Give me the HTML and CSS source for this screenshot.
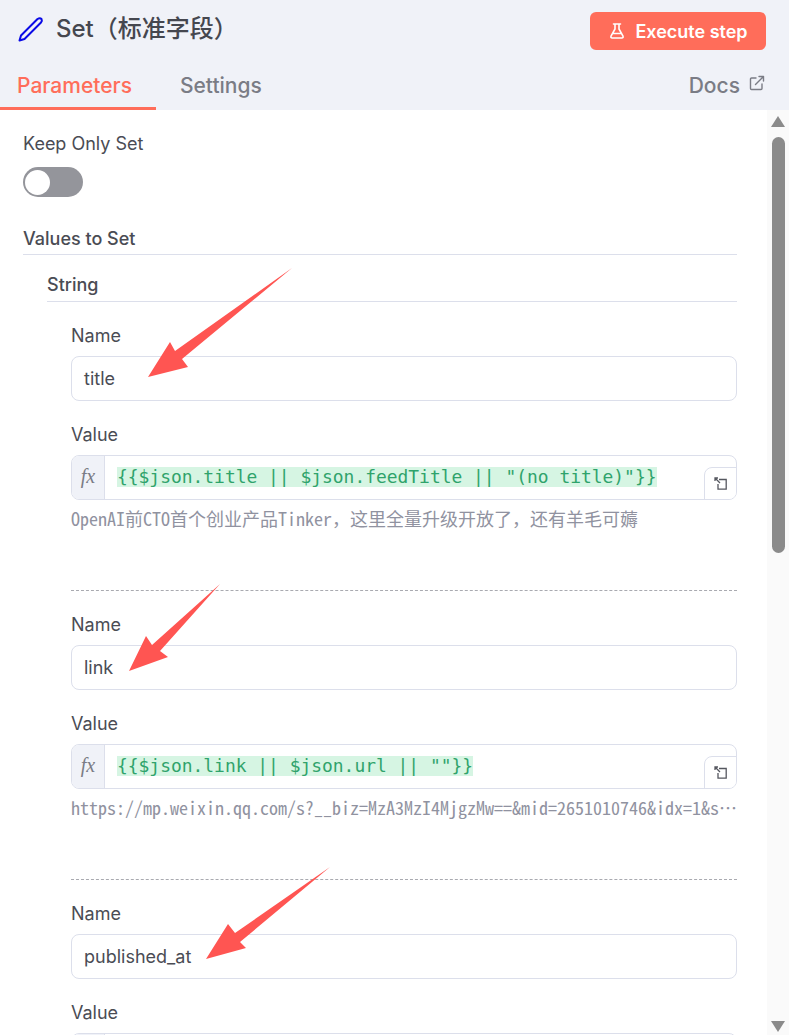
FILE: index.html
```html
<!DOCTYPE html>
<html lang="en">
<head>
<meta charset="utf-8">
<title>Set</title>
<link rel="stylesheet" href="styles.css">
</head>
<body>
<div class="panel">
  <header class="header">
    <div class="title-row">
      <div class="title">
        <svg class="pencil" width="28" height="28" viewBox="0 0 28 28" fill="none" stroke="#0a0ae6" stroke-width="2" stroke-linejoin="round">
          <path d="M3.5 25.5 L5 20.5 L21.5 4 Q24 2.5 25.5 4 Q26.5 6 25 7.5 L8.5 24 Z"/>
        </svg>
        <span class="title-text">Set（标准字段）</span>
      </div>
      <button class="exec">
        <svg width="18" height="18" viewBox="0 0 18 18" fill="none" stroke="#fff" stroke-width="1.6" stroke-linejoin="round" stroke-linecap="round">
          <path d="M5.5 2h7M7 2v5L3 14.2Q2.5 16 4.2 16h9.6q1.7 0 1.2-1.8L11 7V2M5 11.5h8"/>
        </svg>
        <span>Execute step</span>
      </button>
    </div>
    <nav class="tabs">
      <div class="tab tab-active">Parameters</div>
      <div class="tab tab-second">Settings</div>
      <div class="docs">
        <span>Docs</span>
        <svg width="16" height="16" viewBox="0 0 16 16" fill="none" stroke="#7a7c85" stroke-width="1.4" stroke-linecap="round" stroke-linejoin="round">
          <path d="M7 3H2.5A1 1 0 0 0 1.5 4v9.5a1 1 0 0 0 1 1H12a1 1 0 0 0 1-1V9M6.5 9.5 14.5 1.5M10 1.5h4.5V6"/>
        </svg>
      </div>
    </nav>
  </header>
  <main class="body">
    <div class="content">
      <div class="label">Keep Only Set</div>
      <div class="toggle"><span class="knob"></span></div>
      <div class="section-head values">Values to Set</div>
      <div class="nested">
        <div class="section-head string">String</div>
        <div class="items">
          <section class="item">
            <div class="label">Name</div>
            <div class="input">title</div>
            <div class="label value-label">Value</div>
            <div class="expr">
              <div class="fx">fx</div>
              <div class="code"><span class="mark">{{$json.title || $json.feedTitle || "(no title)"}}</span></div>
              <div class="expand"><svg width="14" height="14" viewBox="0 0 14 14" fill="none" stroke="#55575f" stroke-width="1.3"><path d="M5 2.5h7.2v9.7H4V7M1 1l5 5M1 4V1h3"/></svg></div>
            </div>
            <div class="hint">OpenAI前CTO首个创业产品Tinker，这里全量升级开放了，还有羊毛可薅</div>
          </section>
          <section class="item">
            <div class="label">Name</div>
            <div class="input">link</div>
            <div class="label value-label">Value</div>
            <div class="expr">
              <div class="fx">fx</div>
              <div class="code"><span class="mark">{{$json.link || $json.url || ""}}</span></div>
              <div class="expand"><svg width="14" height="14" viewBox="0 0 14 14" fill="none" stroke="#55575f" stroke-width="1.3"><path d="M5 2.5h7.2v9.7H4V7M1 1l5 5M1 4V1h3"/></svg></div>
            </div>
            <div class="hint">https://mp.weixin.qq.com/s?__biz=MzA3MzI4MjgzMw==&amp;mid=2651010746&amp;idx=1&amp;sn=0a7f3c21</div>
          </section>
          <section class="item">
            <div class="label">Name</div>
            <div class="input">published_at</div>
            <div class="label value-label">Value</div>
            <div class="expr">
              <div class="fx">fx</div>
              <div class="code"></div>
            </div>
          </section>
        </div>
      </div>
    </div>
    <aside class="scrollbar">
      <span class="sb-up"></span>
      <span class="sb-thumb"></span>
      <span class="sb-down"></span>
    </aside>
  </main>
  <svg class="arrows" width="789" height="1035" viewBox="0 0 789 1035" fill="#ff5552">
    <polygon points="148,377 170,342 175,351 292,268 182,359 188,367"/>
    <polygon points="129,671 146,636 152,645 220,584 160,651 168,657"/>
    <polygon points="206,959 228,924 235,933 330,867 240,942 246,948"/>
  </svg>
</div>
</body>
</html>
```
FILE: styles.css
```css
* { box-sizing: border-box; }
html, body { margin: 0; padding: 0; }
body {
  font-family: Inter, "Noto Sans CJK SC", sans-serif;
  color: #45474f;
  background: #fff;
}
.panel {
  position: relative;
  height: 1035px;
  overflow: hidden;
  display: flex;
  flex-direction: column;
}
.header {
  height: 110px;
  flex: none;
  background: #f0f2f8;
  display: flex;
  flex-direction: column;
}
.title-row {
  height: 62px;
  display: flex;
  align-items: center;
  justify-content: space-between;
  padding: 0 23px 0 16px;
}
.title { display: flex; align-items: center; gap: 12px; margin-top: -4px; }
.pencil { display: block; }
.title-text { font-size: 24px; line-height: 28px; font-weight: 500; color: #45474f; }
.exec {
  width: 176px;
  height: 38px;
  border: 0;
  border-radius: 6px;
  background: #ff6d5a;
  color: #fff;
  font: 600 18px Inter, sans-serif;
  display: flex;
  align-items: center;
  justify-content: center;
  gap: 9px;
  padding: 0;
}
.tabs {
  flex: 1;
  display: flex;
  align-items: stretch;
  font-size: 21px;
  font-weight: 500;
  color: #7a7c85;
}
.tab {
  padding: 0 24px 2px 17px;
  display: flex;
  align-items: center;
}
.tab-second { margin-left: 7px; }
.tab-active {
  color: #ff6d5a;
  border-bottom: 3px solid #ff6d5a;
  padding-top: 1px;
  padding-bottom: 0;
}
.docs {
  margin-left: auto;
  padding: 0 24px 2px 0;
  display: flex;
  align-items: center;
  gap: 9px;
}
.docs svg { margin-top: -4px; }
.body { flex: 1; display: flex; min-height: 0; }
.content {
  flex: 1;
  min-width: 0;
  padding: 22px 30px 0 23px;
}
.label { font-size: 18px; line-height: 24px; color: #4a4c54; }
.toggle {
  width: 60px;
  height: 30px;
  margin-top: 11px;
  border-radius: 15px;
  background: #94959b;
  padding: 2.5px 1.5px;
}
.knob { display: block; width: 25px; height: 25px; border-radius: 50%; background: #fff; }
.section-head {
  font-size: 18px;
  line-height: 24px;
  font-weight: 500;
  color: #4a4c54;
  border-bottom: 1px solid #dcdfeb;
}
.values { margin-top: 30px; padding-bottom: 3px; }
.nested { padding-left: 24px; }
.string { margin-top: 18px; padding-bottom: 4px; }
.items { padding-left: 24px; }
.item { padding-top: 22px; }
.item + .item { border-top: 1px dashed #a9aab0; margin-top: 60.2px; }
.input {
  margin-top: 8px;
  height: 45px;
  border: 1px solid #dcdfeb;
  border-radius: 8px;
  padding: 0 12px;
  display: flex;
  align-items: center;
  font-size: 18px;
  color: #4a4c54;
}
.value-label { margin-top: 22px; }
.expr {
  position: relative;
  margin-top: 8px;
  height: 45px;
  border: 1px solid #dcdfeb;
  border-radius: 8px;
  display: flex;
  overflow: hidden;
}
.fx {
  width: 33px;
  flex: none;
  background: #f0f2f8;
  border-right: 1px solid #dcdfeb;
  display: flex;
  align-items: center;
  justify-content: center;
  font: italic 20px/24px "Liberation Serif", serif;
  color: #7a7c85;
  padding-bottom: 3px;
}
.code {
  flex: 1;
  padding: 0 0 2px 12px;
  font: 17.93px/20px "DejaVu Sans Mono", monospace;
  color: #2fa36b;
  white-space: nowrap;
  display: flex;
  align-items: center;
}
.mark { background: #d6f5e3; }
.expand {
  position: absolute;
  right: -1px;
  bottom: -1px;
  width: 33px;
  height: 33px;
  border: 1px solid #dcdfeb;
  border-top-left-radius: 8px;
  background: #fff;
  display: flex;
  align-items: center;
  justify-content: center;
}
.hint {
  margin-top: 6px;
  font: 18px/24px "Noto Sans Mono CJK SC", "Noto Sans CJK SC", monospace;
  color: #9092a0;
  white-space: nowrap;
  overflow: hidden;
  text-overflow: ellipsis;
}
.scrollbar {
  width: 22px;
  flex: none;
  position: relative;
  background: #fafafa;
  display: flex;
  flex-direction: column;
  align-items: center;
  padding-top: 6px;
}
.sb-up {
  width: 0; height: 0;
  border-left: 7.5px solid transparent;
  border-right: 7.5px solid transparent;
  border-bottom: 11px solid #8b8b8b;
}
.sb-thumb {
  width: 13px;
  height: 416px;
  margin-top: 10px;
  border-radius: 7px;
  background: #8b8b8b;
}
.sb-down {
  position: absolute;
  bottom: 3px;
  left: 3.5px;
  width: 0; height: 0;
  border-left: 7.5px solid transparent;
  border-right: 7.5px solid transparent;
  border-top: 11px solid #8b8b8b;
}
.arrows { position: absolute; left: 0; top: 0; pointer-events: none; }
```
